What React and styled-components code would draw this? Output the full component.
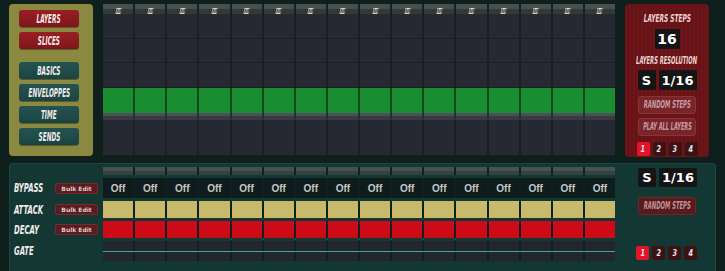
import React from 'react';
import styled, { createGlobalStyle, css } from 'styled-components';

const cols = Array.from({ length: 16 }, (_, i) => i);

const GlobalStyle = createGlobalStyle`
  html, body {
    margin: 0;
    padding: 0;
    background: #0e1f1c;
    overflow: hidden;
  }
`;

const comic = css`
  font-family: "DejaVu Sans Condensed", "DejaVu Sans", sans-serif;
  font-stretch: condensed;
  font-weight: 700;
  font-style: italic;
  text-transform: uppercase;
`;

const Ink = styled.span`
  ${comic};
  display: inline-block;
  white-space: nowrap;
  font-size: ${p => p.$size || 12}px;
  line-height: 1;
  transform: scaleX(${p => p.$squeeze || 0.53});
  transform-origin: ${p => p.$origin || 'center'};
  color: ${p => p.$color || '#f2ecec'};
`;

const Page = styled.div`
  width: 725px;
  height: 271px;
  overflow: hidden;
  display: flex;
  flex-direction: column;
  background: #0e1f1c;
`;

const Top = styled.div`
  display: flex;
  padding: 4px 0 0 9px;
`;

const SidePanel = styled.div`
  width: 84px;
  height: 152px;
  box-sizing: border-box;
  background: #8b893f;
  border-radius: 4px;
  padding: 6px 0 0 10px;
  display: flex;
  flex-direction: column;
  gap: 5px;
`;

const NavButton = styled.div`
  width: 60px;
  height: 17px;
  border-radius: 3px;
  display: flex;
  align-items: center;
  justify-content: center;
  margin-top: ${p => (p.$spaced ? 8 : 0)}px;
  background: ${p => (p.$red ? 'linear-gradient(#9a1f24, #7e161a)' : 'linear-gradient(#245350, #1b4441)')};
  box-shadow: 0 1px 0 rgba(0, 0, 0, 0.35);
`;

const LayerGrid = styled.div`
  margin-left: 10px;
  width: 512px;
  height: 151px;
  background: #1b1e23;
  display: flex;
  flex-direction: column;
`;

const Row = styled.div`
  display: grid;
  grid-template-columns: repeat(16, 1fr);
  column-gap: 2px;
  height: ${p => p.$h}px;
  margin-bottom: ${p => p.$sep || 0}px;
  background: ${p => p.$line || '#1b1e23'};
`;

const Cell = styled.div`
  background: ${p => p.$bg || '#262932'};
`;

const HeadCell = styled.div`
  background: linear-gradient(#48504e 0 50%, #323a38 50% 100%);
  display: flex;
  align-items: center;
  justify-content: center;
`;

const StripeCell = styled.div`
  background: linear-gradient(#4b4f57 0 45%, #363a41 45% 100%);
`;

const MuteTag = styled.span`
  font-family: "Liberation Sans", sans-serif;
  font-weight: 700;
  font-size: 6px;
  line-height: 6px;
  width: 5px;
  height: 6px;
  background: #cfcfcf;
  color: #3a3a3a;
  text-align: center;
  transform: skewX(-10deg);
  margin-top: 3px;
`;

const RightPanel = styled.div`
  margin-left: 10px;
  width: 84px;
  height: 153px;
  border-radius: 4px;
  background: repeating-linear-gradient(90deg, #6e151a 0 2px, #651317 2px 4px);
  display: flex;
  flex-direction: column;
  align-items: center;
  padding-top: 10px;
  box-sizing: border-box;
`;

const Title = styled.div`
  height: 10px;
  display: flex;
  align-items: center;
  justify-content: center;
  margin-top: ${p => p.$mt || 0}px;
`;

const ValueBox = styled.div`
  font-family: "DejaVu Sans", sans-serif;
  font-weight: 700;
  color: #fff;
  background: #151515;
  border-radius: 2px;
  width: ${p => p.$w}px;
  height: ${p => p.$h || 20}px;
  font-size: ${p => p.$size || 13}px;
  display: flex;
  align-items: center;
  justify-content: center;
  margin-top: ${p => p.$mt || 0}px;
`;

const Pair = styled.div`
  display: flex;
  gap: 3px;
  margin-top: ${p => p.$mt || 0}px;
  margin-left: ${p => p.$ml || 0}px;
`;

const RedButton = styled.div`
  width: 58px;
  height: 18px;
  box-sizing: border-box;
  border-radius: 3px;
  border: 1px solid ${p => (p.$dark ? '#6e2628' : '#8a3236')};
  background: ${p => (p.$dark ? '#551b1d' : '#79242a')};
  display: flex;
  align-items: center;
  justify-content: center;
  margin-top: ${p => p.$mt || 0}px;
  margin-left: ${p => p.$ml || 0}px;
`;

const Tabs = styled.div`
  display: flex;
  gap: 3px;
  margin-top: ${p => p.$mt || 0}px;
`;

const Tab = styled.div`
  width: 13px;
  height: 14px;
  border-radius: 2px;
  background: ${p => (p.$on ? '#e3142a' : '#3b1314')};
  display: flex;
  align-items: center;
  justify-content: center;
`;

const Bottom = styled.div`
  margin: 6px 0 0 9px;
  width: 707px;
  flex: 1;
  box-sizing: border-box;
  background: #133833;
  border: 1px solid #1c4640;
  border-bottom: none;
  border-radius: 4px 4px 0 0;
  padding-top: 3px;
  display: grid;
  grid-template-columns: 93px 512px 1fr;
  grid-template-rows: 8px 20px 17px 17px 20px;
  row-gap: 3px;
`;

const LabelCell = styled.div`
  display: grid;
  grid-template-columns: minmax(0, 1fr) 43px;
  align-items: center;
  padding: 0 5px 0 4px;
`;

const BulkButton = styled.div`
  width: 43px;
  height: 11px;
  box-sizing: border-box;
  border-radius: 2px;
  background: #5a1c1e;
  border: 1px solid #772a2d;
  color: #dccaca;
  font-family: "DejaVu Sans", sans-serif;
  font-weight: 700;
  font-size: 6px;
  display: flex;
  align-items: center;
  justify-content: center;
`;

const StepRow = styled.div`
  display: grid;
  grid-template-columns: repeat(16, 1fr);
  column-gap: 2px;
  background: #0b2320;
  position: relative;
`;

const StepCell = styled.div`
  background: ${p => p.$bg};
  display: flex;
  align-items: center;
  justify-content: center;
  font-family: "Liberation Sans", sans-serif;
  font-weight: 700;
  font-size: 10px;
  color: #c4c8c8;
`;

const GateLine = styled.div`
  position: absolute;
  left: 0;
  right: 0;
  top: 10px;
  height: 1px;
  background: #3aa7a6;
`;

const Side = styled.div`
  grid-column: 3;
  grid-row: 1 / -1;
  padding: 1px 0 0 21px;
  display: flex;
  flex-direction: column;
  align-items: flex-start;
`;

const labels = [
  { name: 'Bypass', bulk: true },
  { name: 'Attack', bulk: true },
  { name: 'Decay', bulk: true },
  { name: 'Gate', bulk: false },
];

const tabNumbers = [1, 2, 3, 4];

export default function App() {
  return (
    <Page>
      <GlobalStyle />
      <Top>
        <SidePanel>
          <NavButton $red><Ink>Layers</Ink></NavButton>
          <NavButton $red><Ink>Slices</Ink></NavButton>
          <NavButton $spaced><Ink>Basics</Ink></NavButton>
          <NavButton><Ink>Enveloppes</Ink></NavButton>
          <NavButton><Ink>Time</Ink></NavButton>
          <NavButton><Ink>Sends</Ink></NavButton>
        </SidePanel>

        <LayerGrid>
          <Row $h={10}>
            {cols.map(i => <HeadCell key={i}><MuteTag>M</MuteTag></HeadCell>)}
          </Row>
          <Row $h={24} $sep={1}>{cols.map(i => <Cell key={i} />)}</Row>
          <Row $h={23} $sep={1}>{cols.map(i => <Cell key={i} />)}</Row>
          <Row $h={24} $sep={1}>{cols.map(i => <Cell key={i} />)}</Row>
          <Row $h={25} $line="#0e4b1c">{cols.map(i => <Cell key={i} $bg="#1b8d31" />)}</Row>
          <Row $h={7} $line="#2b2f35">{cols.map(i => <StripeCell key={i} />)}</Row>
          <Row $h={35}>{cols.map(i => <Cell key={i} />)}</Row>
        </LayerGrid>

        <RightPanel>
          <Title><Ink $size={10} $squeeze={0.65} $color="#ecd6cf">Layers Steps</Ink></Title>
          <ValueBox $w={25} $size={14} $mt={5}>16</ValueBox>
          <Title $mt={7}><Ink $size={10} $squeeze={0.58} $color="#ecd6cf">Layers Resolution</Ink></Title>
          <Pair $mt={4}>
            <ValueBox $w={18}>S</ValueBox>
            <ValueBox $w={38}>1/16</ValueBox>
          </Pair>
          <RedButton $mt={6}><Ink $size={10} $squeeze={0.585} $color="#c79ea0">Random Steps</Ink></RedButton>
          <RedButton $mt={4}><Ink $size={10} $squeeze={0.56} $color="#c79ea0">Play All Layers</Ink></RedButton>
          <Tabs $mt={6}>
            {tabNumbers.map(n => (
              <Tab key={n} $on={n === 1}><Ink $size={9} $squeeze={0.8} $color="#f0e4e4">{n}</Ink></Tab>
            ))}
          </Tabs>
        </RightPanel>
      </Top>

      <Bottom>
        <div />
        <StepRow>
          {cols.map(i => <StepCell key={i} $bg="linear-gradient(#46524f 0 50%, #35423f 50% 100%)" />)}
        </StepRow>
        <Side>
          <Pair $ml={2}>
            <ValueBox $w={18} $h={19}>S</ValueBox>
            <ValueBox $w={38} $h={19}>1/16</ValueBox>
          </Pair>
          <RedButton $dark $mt={10} $ml={2}><Ink $size={10} $squeeze={0.585} $color="#c49496">Random Steps</Ink></RedButton>
          <Tabs $mt={31}>
            {tabNumbers.map(n => (
              <Tab key={n} $on={n === 1}><Ink $size={9} $squeeze={0.8} $color="#f0e4e4">{n}</Ink></Tab>
            ))}
          </Tabs>
        </Side>

        {labels.map(l => (
          <React.Fragment key={l.name}>
            <LabelCell>
              <Ink $size={12} $squeeze={0.64} $origin="left">{l.name}</Ink>
              {l.bulk && <BulkButton>Bulk Edit</BulkButton>}
            </LabelCell>
            <StepRow>
              {l.name === 'Bypass' && cols.map(i => <StepCell key={i} $bg="#0f1c1b">Off</StepCell>)}
              {l.name === 'Attack' && cols.map(i => <StepCell key={i} $bg="#c9b96b" />)}
              {l.name === 'Decay' && cols.map(i => <StepCell key={i} $bg="#cf0a18" />)}
              {l.name === 'Gate' && (
                <>
                  {cols.map(i => <StepCell key={i} $bg="#24262e" />)}
                  <GateLine />
                </>
              )}
            </StepRow>
          </React.Fragment>
        ))}
      </Bottom>
    </Page>
  );
}
